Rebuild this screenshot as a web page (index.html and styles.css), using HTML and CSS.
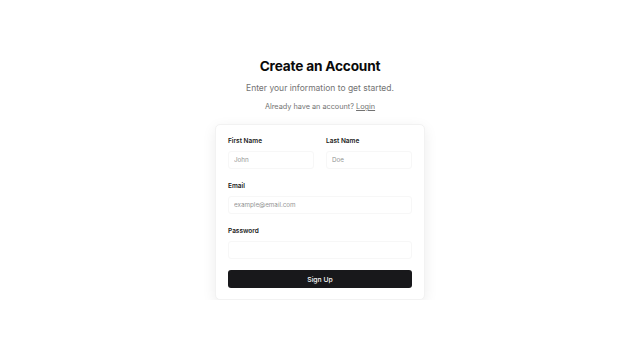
FILE: index.html
```html
<!DOCTYPE html>
<html lang="en">
<head>
<meta charset="utf-8">
<title>Create an Account</title>
<link rel="stylesheet" href="styles.css">
</head>
<body>
<main class="page">
  <h1 class="title">Create an Account</h1>
  <p class="subtitle">Enter your information to get started.</p>
  <p class="signin">Already have an account? <a href="#" class="link">Login</a></p>
  <form class="card">
    <div class="row">
      <div class="field">
        <label class="label">First Name</label>
        <input class="input" placeholder="John">
      </div>
      <div class="field">
        <label class="label">Last Name</label>
        <input class="input" placeholder="Doe">
      </div>
    </div>
    <div class="field">
      <label class="label">Email</label>
      <input class="input" placeholder="example@email.com">
    </div>
    <div class="field">
      <label class="label">Password</label>
      <input class="input" type="password">
    </div>
    <button class="button" type="button">Sign Up</button>
  </form>
</main>
</body>
</html>
```
FILE: styles.css
```css
* { box-sizing: border-box; }
html, body { margin: 0; padding: 0; background: #ffffff; }
body { font-family: Inter, "Liberation Sans", sans-serif; color: #0a0a0a; }
.page {
  display: flex;
  flex-direction: column;
  align-items: center;
  padding-top: 57px;
}
.title {
  margin: 0;
  font-size: 13.7px;
  line-height: 18px;
  font-weight: 700;
  letter-spacing: -0.2px;
  color: #0a0a0a;
}
.subtitle {
  margin: 6px 0 0;
  font-size: 8.5px;
  line-height: 14px;
  color: #737373;
}
.signin {
  margin: 6px 0 0;
  font-size: 7.3px;
  line-height: 12px;
  color: #737373;
}
.link { color: #737373; text-decoration: underline; }
.card {
  margin-top: 11px;
  width: 210px;
  padding: 11px 12px 11px;
  border: 1px solid #f2f2f2;
  border-radius: 5px;
  background: #fff;
  box-shadow: 0 4px 14px rgba(0,0,0,0.08);
  display: flex;
  flex-direction: column;
  gap: 12px;
}
.row { display: grid; grid-template-columns: 1fr 1fr; gap: 12px; }
.field { display: flex; flex-direction: column; gap: 5px; }
.label { font-size: 6.5px; line-height: 10px; font-weight: 600; color: #1a1a1a; }
.input {
  height: 18px;
  padding: 0 5px;
  border: 1px solid #f7f7f7;
  border-radius: 3px;
  font-family: inherit;
  font-size: 6.3px;
  color: #0a0a0a;
  background: #fff;
  outline: none;
  width: 100%;
}
.input::placeholder { color: #949494; }
.button {
  margin-top: -1px;
  height: 18px;
  border: none;
  border-radius: 3px;
  background: #18181b;
  color: #fafafa;
  font-family: inherit;
  font-size: 6.8px;
  font-weight: 500;
  cursor: pointer;
}
```
